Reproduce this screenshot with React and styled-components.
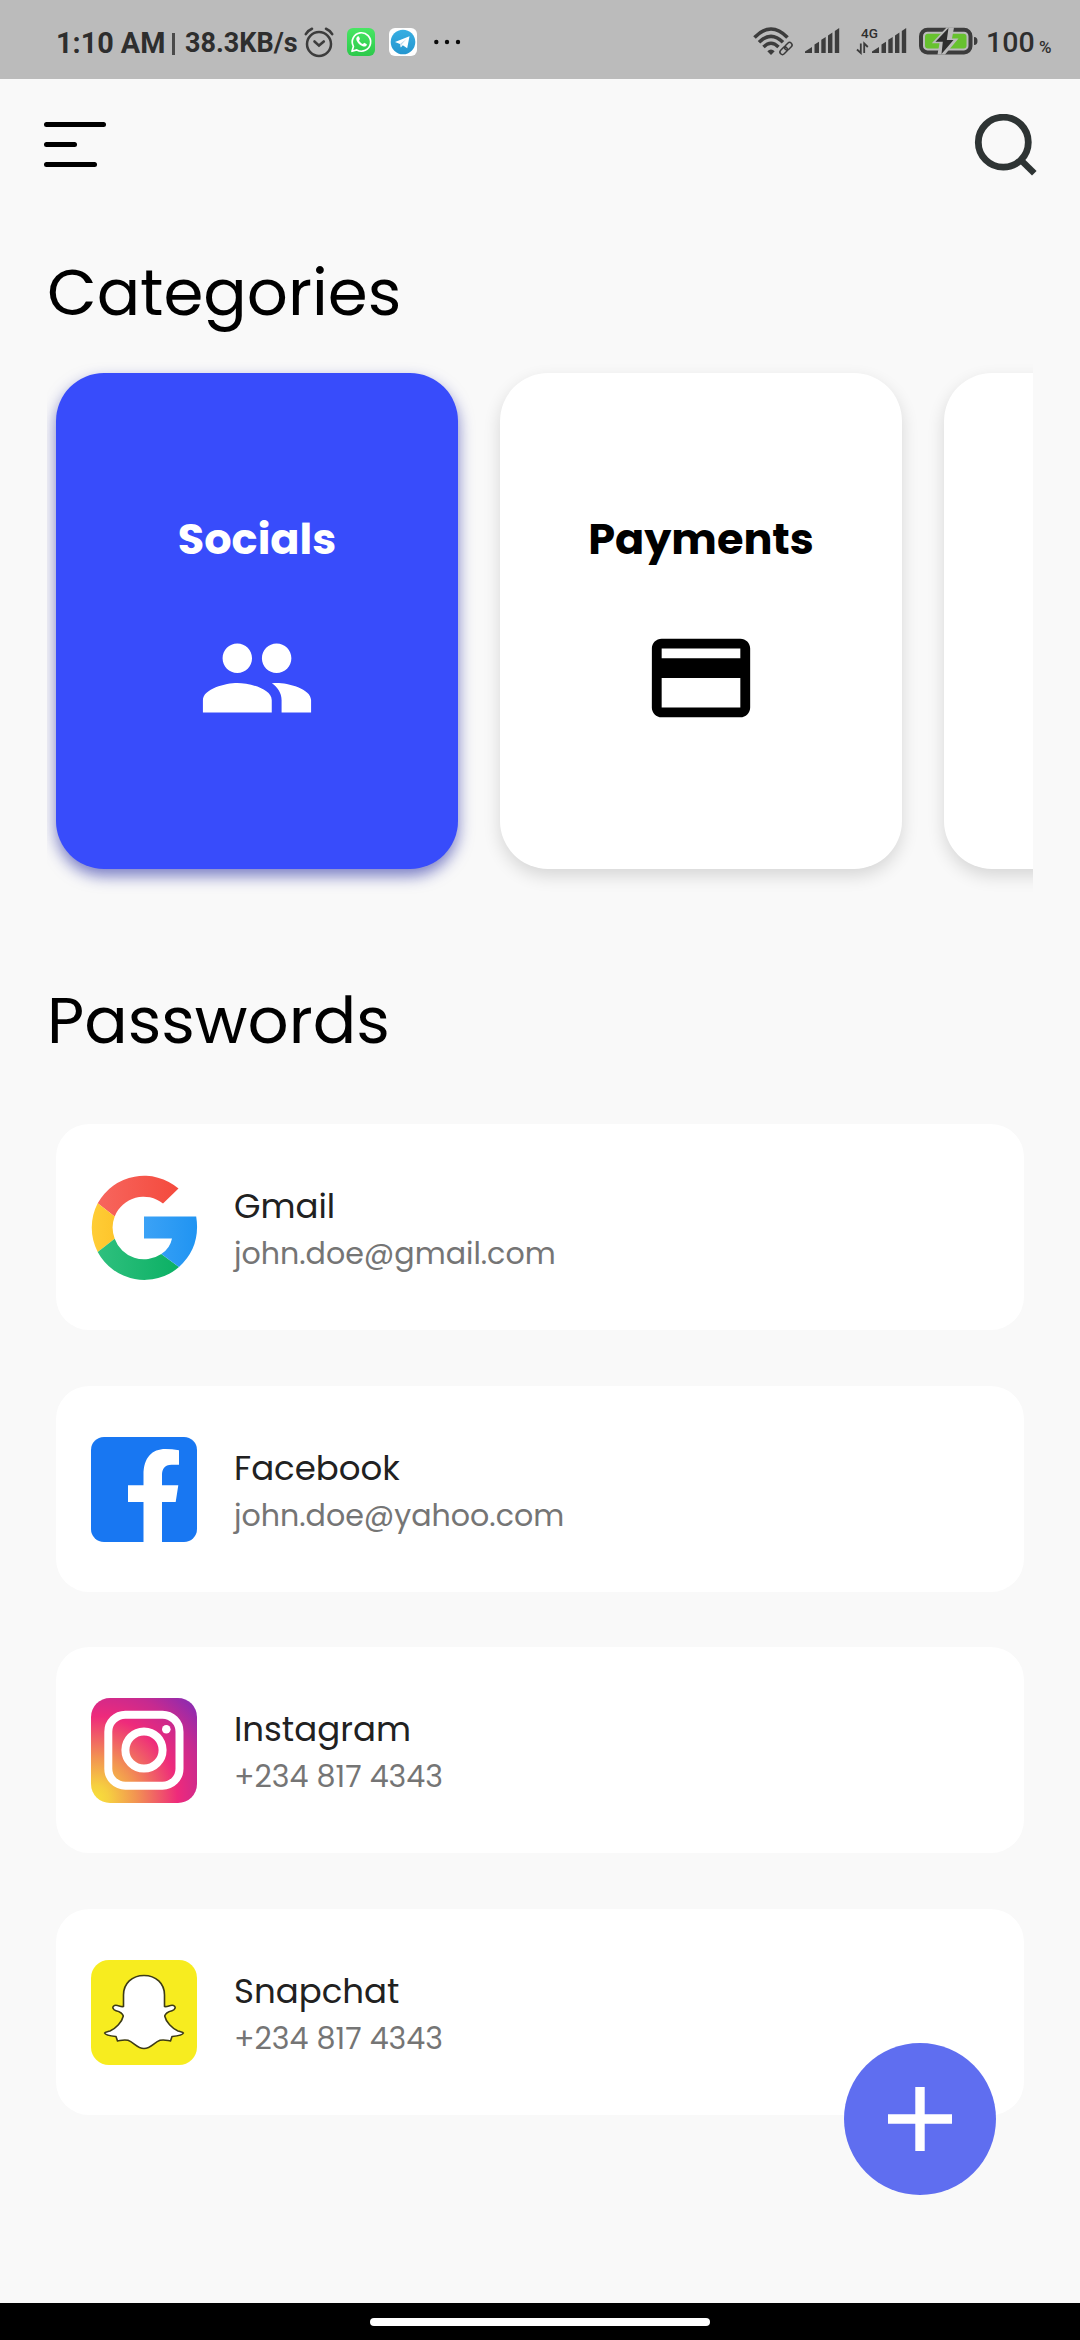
import React from "react";
import styled, { createGlobalStyle } from "styled-components";

const GlobalStyle = createGlobalStyle`
  * { box-sizing: border-box; }
  body { margin: 0; background: #f9f9f9; }
  svg { display: block; flex: none; }
`;

const Screen = styled.div`
  width: 1080px;
  height: 2340px;
  position: relative;
  display: flex;
  flex-direction: column;
  overflow: hidden;
  background: #f9f9f9;
  color: #000;
  font-family: Poppins, Inter, "Liberation Sans", sans-serif;
`;

const StatusBar = styled.header`
  height: 79px;
  flex: none;
  display: flex;
  justify-content: space-between;
  padding: 27px 28px 0 56px;
  background: #bbbbbb;
  color: #2e2e2e;
  font-family: Roboto, sans-serif;
`;

const StatusGroup = styled.div`
  display: flex;
  height: 30px;
  align-items: flex-start;
`;

const StatusText = styled.span`
  width: ${(p) => p.$width}px;
  margin-left: ${(p) => p.$gap || 0}px;
  font-size: ${(p) => p.$size}px;
  font-weight: ${(p) => p.$weight || 700};
  line-height: 32px;
  padding-top: ${(p) => p.$drop || 0}px;
  white-space: nowrap;
`;

const Divider = styled.span`
  width: 3px;
  height: 22px;
  margin: 6px 0 0 8px;
  background: #4a4a4a;
`;

const StatusIcon = styled.svg`
  margin-left: ${(p) => p.$gap}px;
  overflow: visible;
`;

const NetworkType = styled.span`
  height: 12px;
  margin-left: 4px;
  font-size: 13.5px;
  font-weight: 500;
  line-height: 12px;
`;

const MobileNetwork = styled.div`
  width: 50px;
  height: 30px;
  margin-left: 17px;
  display: grid;
  grid-template-columns: 15px 35px;

  > * { grid-row: 1; }
  > :nth-child(2) { grid-column: 2; }
`;

const NetworkLabel = styled.div`
  display: flex;
  flex-direction: column;
  gap: 3px;
  grid-column: 1;
  white-space: nowrap;
`;

const Toolbar = styled.nav`
  height: 126px;
  flex: none;
  display: flex;
  justify-content: space-between;
  align-items: flex-start;
  padding: 35px 43px 0 44px;
`;

const MenuButton = styled.button`
  display: flex;
  flex-direction: column;
  gap: 15px;
  padding: 8px 0 0;
  border: 0;
  background: none;
`;

const MenuLine = styled.span`
  width: ${(p) => p.$width}px;
  height: 5px;
  border-radius: 3px;
  background: #000;
`;

const IconButton = styled.button`
  padding: 0;
  border: 0;
  background: none;
`;

const Heading = styled.h1`
  margin: ${(p) => p.$top}px 0 0 47px;
  font-size: 64.3px;
  font-weight: 400;
  line-height: 80px;
  white-space: nowrap;
`;

const Categories = styled.section`
  display: flex;
  gap: 42px;
  flex: none;
  width: 986px;
  height: 552px;
  margin: 20px 0 0 47px;
  padding: 20px 9px 36px;
  overflow: hidden;
`;

const CategoryCard = styled.article`
  width: 402px;
  height: 496px;
  flex: none;
  display: flex;
  flex-direction: column;
  align-items: center;
  border-radius: 48px;
  padding-top: 141px;
  background: ${(p) => (p.$active ? "#384cfb" : "#fff")};
  color: ${(p) => (p.$active ? "#fff" : "#000")};
  box-shadow: ${(p) =>
    p.$active
      ? "0 7px 15px rgba(30, 36, 160, 0.58)"
      : "0 7px 17px rgba(0, 0, 0, 0.14)"};
`;

const CategoryName = styled.h2`
  margin: 0 0 54px;
  font-size: 43px;
  font-weight: 700;
  line-height: 51px;
`;

const PasswordList = styled.section`
  display: flex;
  flex-direction: column;
  gap: 55.7px;
  padding: 63px 56px 0;
`;

const PasswordCard = styled.article`
  height: 206px;
  display: flex;
  align-items: center;
  gap: 36px;
  padding: 2px 0 0 35px;
  border-radius: 33px;
  background: #fff;
`;

const Account = styled.div`
  display: flex;
  flex-direction: column;
  padding-top: 4px;
`;

const AccountName = styled.div`
  font-size: 34px;
  font-weight: 400;
  line-height: 48px;
  color: #212121;
`;

const AccountLogin = styled.div`
  font-size: 30.1px;
  font-weight: 400;
  line-height: 48px;
  color: #757575;
`;

const AddButton = styled.button`
  position: absolute;
  left: 844px;
  top: 2043px;
  width: 152px;
  height: 152px;
  padding: 0;
  display: grid;
  place-items: center;
  border: 0;
  border-radius: 50%;
  background: #5f6ef0;
`;

const GestureBar = styled.footer`
  height: 37px;
  flex: none;
  margin-top: auto;
  display: flex;
  justify-content: center;
  padding-top: 15px;
  background: #000;
`;

const GestureHandle = styled.span`
  width: 340px;
  height: 8px;
  border-radius: 4px;
  background: #fff;
`;

const Alarm = () => (
  <StatusIcon $gap={9} width="30" height="31" viewBox="0 0 30 31" fill="none" stroke="#3c3c3c" strokeLinecap="round">
    <circle cx="15" cy="17" r="12" strokeWidth="2.5" />
    <path d="M1.8 7.2 Q4 3.4 8 1.8M28.2 7.2Q26 3.4 22 1.8" strokeWidth="2.6" />
    <path d="M10.5 14.5 15 18.6 19.8 14.5" strokeWidth="2.6" />
  </StatusIcon>
);

const WhatsApp = () => (
  <StatusIcon $gap={13} width="28" height="30" viewBox="0 0 28 30">
    <defs>
      <linearGradient id="wa" x2="0" y2="1">
        <stop stopColor="#48e663" />
        <stop offset="1" stopColor="#2cc94b" />
      </linearGradient>
    </defs>
    <rect y="1" width="28" height="28" rx="6" fill="url(#wa)" />
    <path d="M5 24.3 6.4 19.4A9.2 9.2 0 1 1 9.8 22.9Z" fill="none" stroke="#fff" strokeWidth="1.7" strokeLinejoin="round" />
    <path d="M10.3 9.8c.9-.8 1.6-.6 1.9.2l.7 1.7c.2.6-.9 1.3-.8 1.7.7 1.6 2 2.8 3.7 3.6.5.2 1.2-1.4 1.8-1.1l1.9 1c.6.3.3 1.5-.4 2-1 .8-2.2.8-3.4.3-2.9-1.2-5-3.2-6.1-5.8-.6-1.4-.3-2.7.7-3.6Z" fill="#fff" />
  </StatusIcon>
);

const Telegram = () => (
  <StatusIcon $gap={14} width="28" height="30" viewBox="0 0 28 30">
    <defs>
      <linearGradient id="tg" x2="0" y2="1">
        <stop stopColor="#37aee2" />
        <stop offset="1" stopColor="#2496cf" />
      </linearGradient>
    </defs>
    <rect y="1" width="28" height="28" rx="6" fill="#fff" />
    <circle cx="14" cy="15" r="12.3" fill="url(#tg)" />
    <path d="M6 15 20.5 9.3 18.2 21.3 13.8 18.3 11.8 20.5 11 17Z" fill="#fff" />
    <path d="M11 17 17.5 12 12.6 17.6 11.9 20.3Z" fill="#b9d8ec" />
  </StatusIcon>
);

const Dots = () => (
  <StatusIcon $gap={17} width="28" height="30" viewBox="0 0 28 30" fill="#0a0a0a">
    <circle cx="2.3" cy="15" r="2.2" />
    <circle cx="13" cy="15" r="2.2" />
    <circle cx="24" cy="15" r="2.2" />
  </StatusIcon>
);

const Wifi = () => (
  <StatusIcon $gap={0} width="40" height="30" viewBox="0 0 40 30" fill="none" stroke="#3c3c3c">
    <path d="M1.5 10.5 Q18 -6.5 34.5 10.5" strokeWidth="3.6" />
    <path d="M6 15.3 Q18 3.3 30 15.3" strokeWidth="3.5" />
    <path d="M10.5 20 Q18 12.5 25.5 20" strokeWidth="3.4" />
    <path d="M14.3 24.3Q18 20.8 21.7 24.3L18 28Z" fill="#3c3c3c" stroke="none" />
    <g strokeWidth="1.5" transform="rotate(-45 33 21.5)">
      <rect x="25.5" y="19" width="8.5" height="5" rx="2.5" />
      <rect x="32" y="19" width="8.5" height="5" rx="2.5" />
    </g>
  </StatusIcon>
);

const Signal = ({ gap }) => (
  <StatusIcon $gap={gap} width="35" height="30" viewBox="0 0 35 30" fill="#3c3c3c">
    <path d="M0 26V24.5L7 20V26Z" />
    <path d="M9.5 26V17.5L14 14.8V26Z" />
    <path d="M16.3 26V12.8L20.7 10V26Z" />
    <path d="M23 26V8.5L27.4 5.5V26Z" />
    <path d="M29.8 26V4L34.2 1V26Z" />
  </StatusIcon>
);

const DataArrows = () => (
  <StatusIcon $gap={0} width="12" height="12" viewBox="0 15 12 12">
    <path d="M3.8 16.5V26L0 22.5M7.2 26V16.5L10.8 20" fill="none" stroke="#3c3c3c" strokeWidth="1.8" />
  </StatusIcon>
);

const Battery = () => (
  <StatusIcon $gap={12} width="59" height="30" viewBox="0 0 59 30">
    <rect x="2" y="2.8" width="49.5" height="22.6" rx="6.5" fill="none" stroke="#3c3c3c" strokeWidth="4" />
    <rect x="6" y="6.8" width="41.5" height="14.6" rx="3" fill="#67c22f" />
    <path d="M27.5 0.5 12.8 16.3H20.5L18.5 27.5H26L39.5 11.5H33L35 0.5Z" fill="#bbb" />
    <path d="M29.5 1 16.5 14.8H23.8L22.5 27 34.5 13H27.8L29.5 1Z" fill="#2e2e2e" />
    <path d="M55 10Q58.5 10 58.5 14T55 18Z" fill="#3c3c3c" />
  </StatusIcon>
);

const SearchIcon = () => (
  <svg width="63" height="63" viewBox="0 0 63 63" fill="none" stroke="#2e3434">
    <circle cx="29.3" cy="28.2" r="25" strokeWidth="6.8" />
    <path d="M46.3 45.5 60.3 59.3" strokeWidth="6.5" />
  </svg>
);

const PeopleIcon = () => (
  <svg width="118" height="118" viewBox="0 0 24 24" fill="currentColor">
    <path d="M16 11c1.66 0 2.99-1.34 2.99-3S17.66 5 16 5s-3 1.34-3 3 1.34 3 3 3zm-8 0c1.66 0 2.99-1.34 2.99-3S9.66 5 8 5 5 6.34 5 8s1.34 3 3 3zm0 2c-2.33 0-7 1.17-7 3.5V19h14v-2.5c0-2.33-4.67-3.5-7-3.5zm8 0c-.29 0-.62.02-.97.05 1.16.84 1.97 1.97 1.97 3.45V19h6v-2.5c0-2.33-4.67-3.5-7-3.5z" />
  </svg>
);

const CardIcon = () => (
  <svg width="118" height="118" viewBox="0 0 24 24" fill="currentColor">
    <path d="M20 4H4c-1.11 0-1.99.89-1.99 2L2 18c0 1.11.89 2 2 2h16c1.11 0 2-.89 2-2V6c0-1.11-.89-2-2-2zm0 14H4v-6h16v6zm0-10H4V6h16v2z" />
  </svg>
);

const GoogleLogo = () => (
  <svg width="107" height="106" viewBox="0 0 107 106">
    <defs>
      <linearGradient id="gRed"><stop stopColor="#f7665e" /><stop offset="1" stopColor="#f44a3d" /></linearGradient>
      <linearGradient id="gYellow"><stop stopColor="#ffcd36" /><stop offset="1" stopColor="#fdc52c" /></linearGradient>
      <linearGradient id="gGreen"><stop stopColor="#2fc07e" /><stop offset="1" stopColor="#0bb064" /></linearGradient>
      <linearGradient id="gBlue"><stop stopColor="#3ba2f6" /><stop offset="1" stopColor="#2094f2" /></linearGradient>
    </defs>
    <path d="M87.5 13.5A53 53 0 0 0 6.7 28.2L23.7 41.5A31 31 0 0 1 72 28.5Z" fill="url(#gRed)" />
    <path d="M6.7 28.2A53 53 0 0 0 6.7 77L23.7 63.7A31 31 0 0 1 23.7 41.5Z" fill="url(#gYellow)" />
    <path d="M6.7 77A53 53 0 0 0 88 92L70.3 79A31 31 0 0 1 23.7 63.7Z" fill="url(#gGreen)" />
    <path d="M53 41.5H105.2Q110 72 88 92L70.3 79Q79 73.5 81 63.5H53Z" fill="url(#gBlue)" />
  </svg>
);

const FacebookLogo = () => (
  <svg width="107" height="106" viewBox="0 0 107 106">
    <rect width="106" height="105" rx="13" fill="#1877f2" />
    <path d="M52.5 105V65H37V48.3H52.5V38C52.5 20.5 61 12 74.5 12Q81 12 88 13.3V27.7H80.5C73.5 27.7 71 32 71 38V48.3H87.3L84.7 65H71V105Z" fill="#fff" />
  </svg>
);

const InstagramLogo = () => (
  <svg width="107" height="106" viewBox="0 0 107 106">
    <defs>
      <radialGradient id="ig" gradientUnits="userSpaceOnUse" cx="4" cy="101" r="138">
        <stop stopColor="#f8e03a" />
        <stop offset=".1" stopColor="#f6cf40" />
        <stop offset=".3" stopColor="#f29352" />
        <stop offset=".6" stopColor="#ee2a7b" />
        <stop offset=".8" stopColor="#c62a90" />
        <stop offset="1" stopColor="#8a2bb2" />
      </radialGradient>
    </defs>
    <rect width="106" height="105" rx="19" fill="url(#ig)" />
    <g fill="none" stroke="#fff" strokeWidth="8">
      <rect x="17.3" y="16.7" width="71.2" height="71" rx="17" />
      <circle cx="53" cy="52" r="18.6" />
    </g>
    <circle cx="75.3" cy="31.3" r="4.3" fill="#fff" />
  </svg>
);

const SnapchatLogo = () => (
  <svg width="107" height="106" viewBox="0 0 107 106">
    <rect width="106" height="105" rx="18" fill="#f7ec1f" />
    <path
      d="M53 15.5C41 15.5 32.5 23.5 32.5 35V46.5C29 47.2 27 44.5 23.5 45.5C20.5 46.8 22 50 25 50.8C29 51.8 31.5 53 32.3 56C31 62 25 68.5 19 71C16 72 14 72.2 13.6 73C14.5 75.5 20 76 25 76.5L26.5 81C30 80.5 32 79.5 37 80.3C43 82.5 46 88.5 53 88.5C60 88.5 63 82.5 69 80.3C74 79.5 76 80.5 79.5 81L81 76.5C86 76 91.5 75.5 92.4 73C92 72.2 90 72 87 71C81 68.5 75 62 73.7 56C74.5 53 77 51.8 81 50.8C84 50 85.5 46.8 82.5 45.5C79 44.5 77 47.2 73.5 46.5V35C73.5 23.5 65 15.5 53 15.5Z"
      fill="#fff"
      stroke="#3d3b16"
      strokeWidth="1.6"
      strokeLinejoin="round"
    />
  </svg>
);

const accounts = [
  { name: "Gmail", login: "john.doe@gmail.com", Logo: GoogleLogo },
  { name: "Facebook", login: "john.doe@yahoo.com", Logo: FacebookLogo },
  { name: "Instagram", login: "+234 817 4343", Logo: InstagramLogo },
  { name: "Snapchat", login: "+234 817 4343", Logo: SnapchatLogo },
];

export default function App() {
  return (
    <Screen>
      <GlobalStyle />
      <StatusBar>
        <StatusGroup>
          <StatusText $width={108} $size={28.8}>1:10 AM</StatusText>
          <Divider />
          <StatusText $width={110} $gap={10} $size={27}>38.3KB/s</StatusText>
          <Alarm />
          <WhatsApp />
          <Telegram />
          <Dots />
        </StatusGroup>
        <StatusGroup>
          <Wifi />
          <Signal gap={12} />
          <MobileNetwork>
            <NetworkLabel>
              <NetworkType>4G</NetworkType>
              <DataArrows />
            </NetworkLabel>
            <Signal gap={0} />
          </MobileNetwork>
          <Battery />
          <StatusText $width={47} $gap={8} $size={28.5} $weight={500}>100</StatusText>
          <StatusText $width={13} $gap={6} $size={17} $weight={500} $drop={4}>%</StatusText>
        </StatusGroup>
      </StatusBar>

      <Toolbar>
        <MenuButton aria-label="Menu">
          <MenuLine $width={62} />
          <MenuLine $width={33} />
          <MenuLine $width={53} />
        </MenuButton>
        <IconButton aria-label="Search">
          <SearchIcon />
        </IconButton>
      </Toolbar>

      <Heading $top={48}>Categories</Heading>
      <Categories>
        <CategoryCard $active>
          <CategoryName>Socials</CategoryName>
          <PeopleIcon />
        </CategoryCard>
        <CategoryCard>
          <CategoryName>Payments</CategoryName>
          <CardIcon />
        </CategoryCard>
        <CategoryCard />
      </Categories>

      <Heading $top={76}>Passwords</Heading>
      <PasswordList>
        {accounts.map(({ name, login, Logo }) => (
          <PasswordCard key={name}>
            <Logo />
            <Account>
              <AccountName>{name}</AccountName>
              <AccountLogin>{login}</AccountLogin>
            </Account>
          </PasswordCard>
        ))}
      </PasswordList>

      <AddButton aria-label="Add password">
        <svg width="64" height="64" viewBox="0 0 64 64" fill="#fff">
          <path d="M27.3 0h9.4v27.3H64v9.4H36.7V64h-9.4V36.7H0v-9.4h27.3z" />
        </svg>
      </AddButton>

      <GestureBar>
        <GestureHandle />
      </GestureBar>
    </Screen>
  );
}
